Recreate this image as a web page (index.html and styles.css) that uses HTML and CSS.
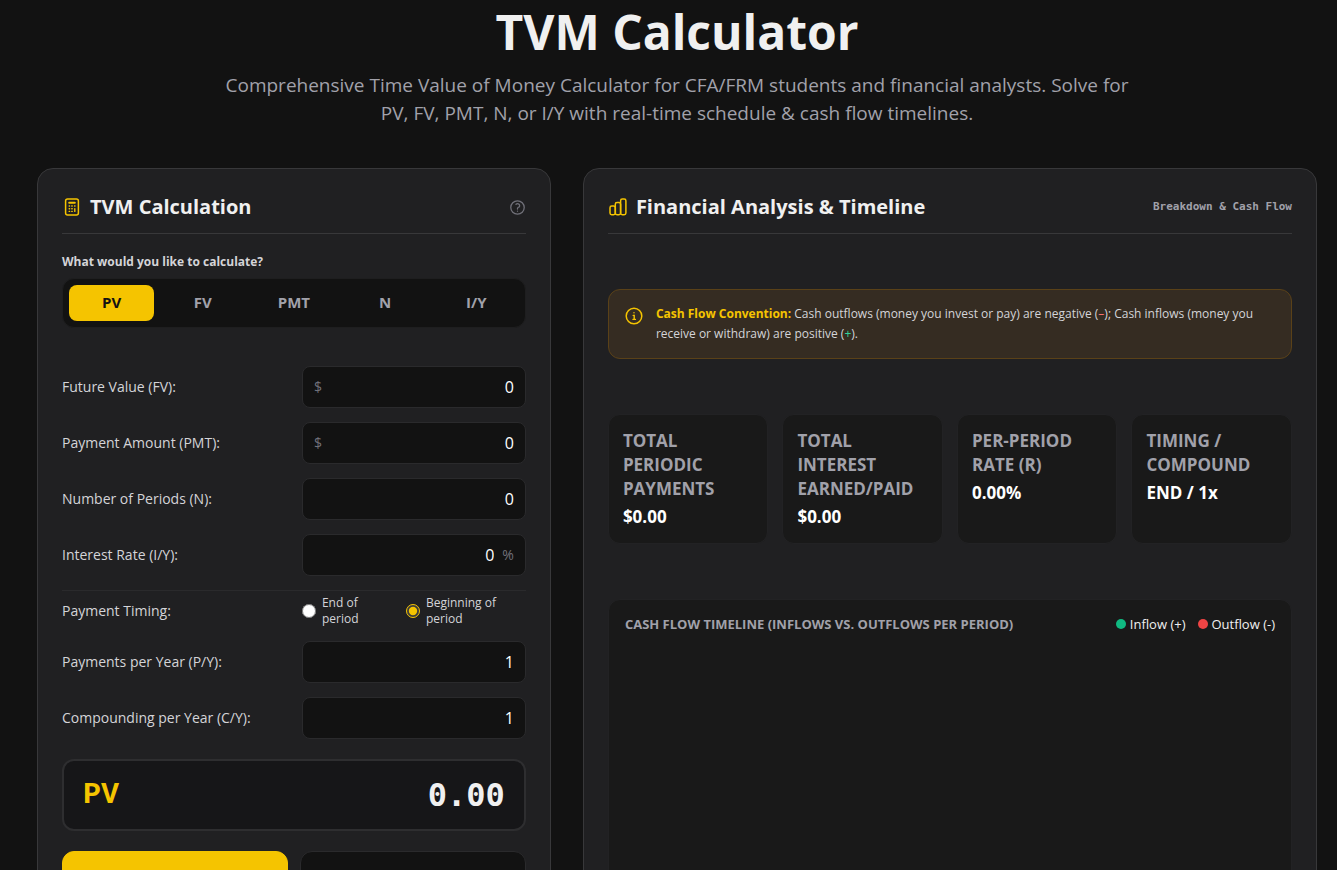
FILE: index.html
```
<!DOCTYPE html>
<html lang="en">
<head>
    <meta charset="UTF-8">
    <meta name="viewport" content="width=device-width, initial-scale=1.0">
    <title>TVM Calculator</title>
    <link rel="stylesheet" href="styles.css">
</head>
<body>
    <header class="hero">
        <h1>TVM Calculator</h1>
        <p>Comprehensive Time Value of Money Calculator for CFA/FRM students and financial analysts. Solve for PV, FV, PMT, N, or I/Y with real-time schedule &amp; cash flow timelines.</p>
    </header>

    <main class="layout">
        <!-- Calculator -->
        <section class="card">
            <div class="card-header">
                <h2>
                    <svg class="icon" viewBox="0 0 20 20" aria-hidden="true">
                        <rect x="3.6" y="2.1" width="12.8" height="15.8" rx="2" fill="none" stroke="currentColor" stroke-width="1.5"/>
                        <path d="M7.2 5.8h5.6" fill="none" stroke="currentColor" stroke-width="2" stroke-linecap="round"/>
                        <path d="M7.2 9h.4M9.8 9h.4M12.6 9h.4M7.2 11.8h.4M9.8 11.8h.4M7.2 14.4h.4M9.8 14.4h.4M12.8 11.6v2.8" fill="none" stroke="currentColor" stroke-width="1.4" stroke-linecap="round"/>
                    </svg>
                    TVM Calculation
                </h2>
                <button class="help-btn" type="button" aria-label="Help">
                    <svg viewBox="0 0 24 24" aria-hidden="true">
                        <path d="M9.88 7.52c1.17-1.03 3.07-1.03 4.24 0 1.17 1.02 1.17 2.69 0 3.71-.2.18-.43.33-.67.45-.75.38-1.45 1.01-1.45 1.82v.75M21.5 12a9.5 9.5 0 1 1-19 0 9.5 9.5 0 0 1 19 0Zm-9.5 5.25h.01" fill="none" stroke="currentColor" stroke-width="1.8" stroke-linecap="round" stroke-linejoin="round"/>
                    </svg>
                </button>
            </div>

            <h3 class="solve-label">What would you like to calculate?</h3>
            <div class="tabs">
                <button class="tab active" type="button">PV</button>
                <button class="tab" type="button">FV</button>
                <button class="tab" type="button">PMT</button>
                <button class="tab" type="button">N</button>
                <button class="tab" type="button">I/Y</button>
            </div>

            <form class="fields">
                <div class="field">
                    <label for="fv">Future Value (FV):</label>
                    <div class="input-box"><span class="unit">$</span><input type="text" id="fv" value="0"></div>
                </div>
                <div class="field">
                    <label for="pmt">Payment Amount (PMT):</label>
                    <div class="input-box"><span class="unit">$</span><input type="text" id="pmt" value="0"></div>
                </div>
                <div class="field">
                    <label for="n">Number of Periods (N):</label>
                    <div class="input-box"><input type="text" id="n" value="0"></div>
                </div>
                <div class="field">
                    <label for="iy">Interest Rate (I/Y):</label>
                    <div class="input-box"><input type="text" id="iy" value="0"><span class="unit">%</span></div>
                </div>
                <div class="field timing" role="radiogroup" aria-labelledby="timingLabel">
                    <span id="timingLabel">Payment Timing:</span>
                    <div class="radios">
                        <label><input type="radio" name="timing" value="end"> End of period</label>
                        <label><input type="radio" name="timing" value="begin" checked> Beginning of period</label>
                    </div>
                </div>
                <div class="field">
                    <label for="py">Payments per Year (P/Y):</label>
                    <div class="input-box"><input type="text" id="py" value="1"></div>
                </div>
                <div class="field">
                    <label for="cy">Compounding per Year (C/Y):</label>
                    <div class="input-box"><input type="text" id="cy" value="1"></div>
                </div>
            </form>

            <div class="result">
                <span class="result-name">PV</span>
                <output class="result-value">0.00</output>
            </div>

            <div class="actions">
                <button class="btn btn-primary" type="button" aria-label="Calculate"></button>
                <button class="btn" type="button" aria-label="Reset"></button>
            </div>
        </section>

        <!-- Analysis -->
        <section class="card">
            <div class="card-header">
                <h2>
                    <svg class="icon" viewBox="0 0 20 20" aria-hidden="true">
                        <g fill="none" stroke="currentColor" stroke-width="1.5">
                            <rect x="2" y="9" width="5.3" height="8.8" rx="1.7"/>
                            <rect x="7.3" y="5.6" width="5.3" height="12.2" rx="1.7"/>
                            <rect x="12.6" y="2" width="5.3" height="15.8" rx="1.7"/>
                        </g>
                    </svg>
                    Financial Analysis &amp; Timeline
                </h2>
                <span class="card-note">Breakdown &amp; Cash Flow</span>
            </div>

            <div class="notice">
                <svg viewBox="0 0 20 20" aria-hidden="true">
                    <circle cx="10" cy="10" r="7.8" fill="none" stroke="currentColor" stroke-width="1.5"/>
                    <path d="M9.2 9.4h1v4M9 13.4h2.4M10 6.6v.1" fill="none" stroke="currentColor" stroke-width="1.4" stroke-linecap="round"/>
                </svg>
                <p><strong>Cash Flow Convention:</strong> Cash outflows (money you invest or pay) are negative (<span class="neg">–</span>); Cash inflows (money you receive or withdraw) are positive (<span class="pos">+</span>).</p>
            </div>

            <div class="stats">
                <div class="stat">
                    <div class="stat-label">Total Periodic Payments</div>
                    <div class="stat-value">$0.00</div>
                </div>
                <div class="stat">
                    <div class="stat-label">Total Interest Earned/Paid</div>
                    <div class="stat-value">$0.00</div>
                </div>
                <div class="stat">
                    <div class="stat-label">Per-Period Rate (r)</div>
                    <div class="stat-value">0.00%</div>
                </div>
                <div class="stat">
                    <div class="stat-label">Timing / Compound</div>
                    <div class="stat-value">END / 1x</div>
                </div>
            </div>

            <div class="timeline">
                <div class="timeline-header">
                    <h3>Cash Flow Timeline (Inflows vs. Outflows per Period)</h3>
                    <div class="legend">
                        <span><i class="dot inflow"></i>Inflow (+)</span>
                        <span><i class="dot outflow"></i>Outflow (-)</span>
                    </div>
                </div>
            </div>
        </section>
    </main>
</body>
</html>
```
FILE: styles.css
```
:root {
    --bg: #121212;
    --card-bg: #202022;
    --panel-bg: #191919;
    --border: #38383a;
    --border-soft: #2a2a2c;
    --accent: #f5c400;
    --text: #f0f0f0;
    --text-soft: #d4d4d8;
    --muted: #a1a1aa;
    --dim: #71717a;
    --green: #10b981;
    --red: #ef4444;
    --mono: "DejaVu Sans Mono", monospace;
}

* {
    box-sizing: border-box;
}

body {
    margin: 0;
    padding: 0 20px 24px 37px;
    background: var(--bg);
    color: var(--text);
    font-family: "Open Sans", "Noto Sans", sans-serif;
    font-size: 16px;
    line-height: 24px;
}

h1, h2, h3, p {
    margin: 0;
}

button, input {
    font-family: inherit;
}

.hero {
    text-align: center;
    padding-bottom: 41px;
}

.hero h1 {
    font-size: 48px;
    line-height: 63px;
    font-weight: 700;
}

.hero p {
    max-width: 920px;
    margin: 8px auto 0;
    font-size: 19px;
    line-height: 28px;
    color: var(--muted);
}

.layout {
    display: grid;
    grid-template-columns: 7fr 10fr;
    gap: 32px;
    max-width: 1280px;
    margin: 0 auto;
}

.card {
    min-width: 0;
    padding: 24px;
    background: var(--card-bg);
    border: 1px solid var(--border);
    border-radius: 16px;
}

.card-header {
    display: flex;
    justify-content: space-between;
    align-items: center;
    padding-bottom: 12px;
    border-bottom: 1px solid var(--border);
}

.card-header h2 {
    display: flex;
    align-items: center;
    gap: 8px;
    font-size: 20px;
    line-height: 28px;
}

.icon {
    width: 20px;
    height: 20px;
    color: var(--accent);
}

.help-btn {
    display: flex;
    padding: 0;
    border: none;
    background: none;
    color: var(--dim);
    cursor: pointer;
}

.help-btn svg {
    width: 17px;
    height: 17px;
}

.card-note {
    font-family: var(--mono);
    font-size: 11px;
    font-weight: 700;
    color: var(--muted);
}

.solve-label {
    margin: 19px 0 7px;
    font-size: 12px;
    line-height: 18px;
    color: var(--text-soft);
}

/* Variable selector */
.tabs {
    display: grid;
    grid-template-columns: repeat(5, 1fr);
    gap: 6px;
    padding: 6px;
    background: var(--bg);
    border: 1px solid #1e1e1f;
    border-radius: 12px;
}

.tab {
    height: 36px;
    padding: 0 0 2px;
    border: none;
    border-radius: 8px;
    background: none;
    color: var(--muted);
    font-size: 15px;
    font-weight: 700;
    cursor: pointer;
}

.tab.active {
    background: var(--accent);
    color: var(--bg);
}

/* Inputs */
.fields {
    display: flex;
    flex-direction: column;
    gap: 14px;
    margin-top: 38px;
}

.field {
    display: grid;
    grid-template-columns: repeat(2, minmax(0, 1fr));
    align-items: center;
    gap: 16px;
    font-size: 14px;
    color: var(--text-soft);
}

.input-box {
    display: flex;
    align-items: center;
    gap: 8px;
    height: 42px;
    padding: 0 11px;
    background: var(--bg);
    border: 1px solid var(--border-soft);
    border-radius: 8px;
}

.input-box input {
    flex: 1;
    min-width: 0;
    padding: 0;
    border: none;
    outline: none;
    background: none;
    color: #fff;
    font-size: 16px;
    text-align: right;
}

.input-box:focus-within {
    border-color: var(--accent);
}

.unit {
    color: var(--dim);
    font-size: 14px;
}

.timing {
    padding-top: 4px;
    border-top: 1px solid var(--border-soft);
}

.radios {
    display: grid;
    grid-template-columns: 88px 1fr;
    gap: 16px;
}

.radios label {
    display: flex;
    align-items: center;
    gap: 6px;
    font-size: 12px;
    line-height: 16px;
    cursor: pointer;
}

.radios input {
    flex: none;
    width: 14px;
    height: 14px;
    margin: 0;
    accent-color: var(--accent);
}

.result {
    display: flex;
    justify-content: space-between;
    align-items: center;
    height: 72px;
    margin-top: 20px;
    padding: 0 19px;
    background: #161618;
    border: 2px solid #2e2e30;
    border-radius: 12px;
    font-family: var(--mono);
    font-weight: 700;
}

.result-name {
    font-family: "Liberation Mono", monospace;
    font-size: 30px;
    color: var(--accent);
}

.result-value {
    font-size: 32px;
}

.actions {
    display: grid;
    grid-template-columns: 1fr 1fr;
    gap: 12px;
    margin-top: 20px;
}

.btn {
    height: 48px;
    border: 1px solid var(--border-soft);
    border-radius: 12px;
    background: var(--bg);
    color: var(--text-soft);
    cursor: pointer;
}

.btn-primary {
    border-color: var(--accent);
    background: var(--accent);
}

/* Analysis column */
.notice {
    display: flex;
    gap: 12px;
    margin-top: 55px;
    padding: 14px 15px;
    background: #352c22;
    border: 1px solid #5a4118;
    border-radius: 12px;
    font-size: 12px;
    line-height: 20px;
    color: var(--text-soft);
}

.notice svg {
    flex: none;
    width: 20px;
    height: 20px;
    margin-top: 2px;
    color: var(--accent);
}

.notice strong {
    color: var(--accent);
}

.neg {
    color: #f87171;
}

.pos {
    color: #34d399;
}

.stats {
    display: grid;
    grid-template-columns: repeat(4, 1fr);
    gap: 14px;
    margin-top: 55px;
}

.stat {
    padding: 14px;
    background: var(--panel-bg);
    border: 1px solid #222224;
    border-radius: 12px;
    font-size: 17px;
    font-weight: 700;
}

.stat-label {
    color: var(--muted);
    text-transform: uppercase;
}

.stat-value {
    margin-top: 4px;
    color: #fff;
}

.timeline {
    min-height: 340px;
    margin-top: 55px;
    padding: 14px 16px;
    background: var(--panel-bg);
    border: 1px solid #222224;
    border-radius: 12px;
}

.timeline-header {
    display: flex;
    justify-content: space-between;
    align-items: center;
    font-size: 13px;
    line-height: 20px;
}

.timeline-header h3 {
    font-size: 13px;
    color: var(--muted);
    text-transform: uppercase;
}

.legend {
    display: flex;
    gap: 12px;
}

.legend span {
    display: flex;
    align-items: center;
    gap: 4px;
}

.dot {
    width: 10px;
    height: 10px;
    border-radius: 50%;
}

.inflow {
    background: var(--green);
}

.outflow {
    background: var(--red);
}
```
